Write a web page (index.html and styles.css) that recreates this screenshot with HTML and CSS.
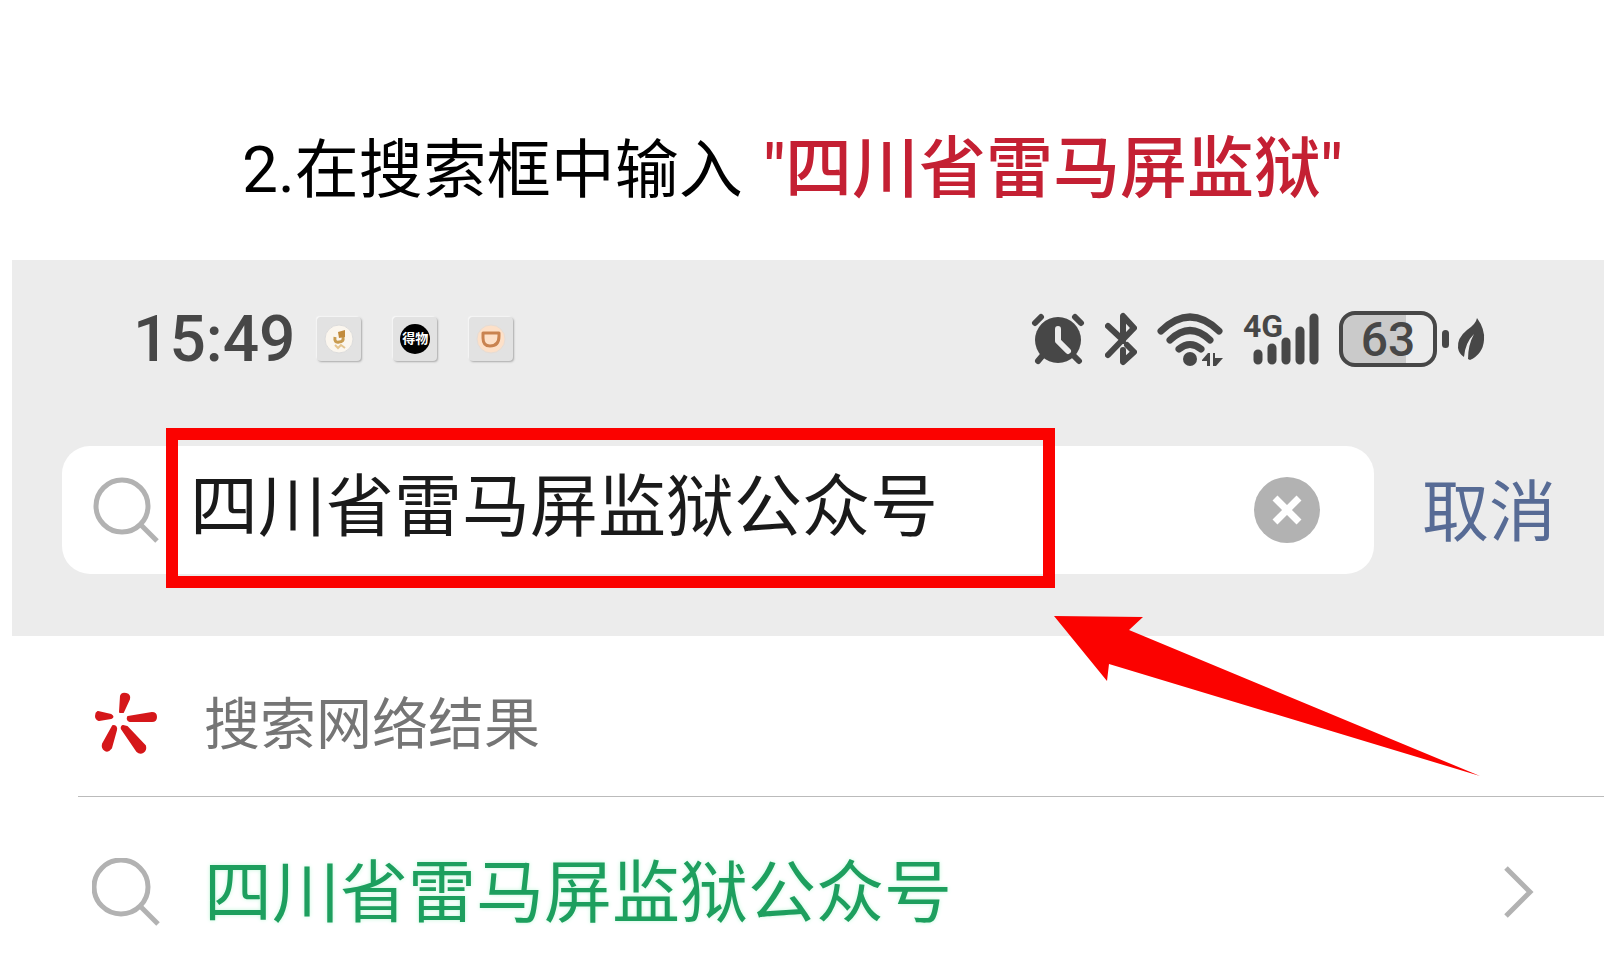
FILE: index.html
```html
<!DOCTYPE html>
<html lang="zh-CN">

<head>
    <meta charset="UTF-8">
    <meta name="viewport" content="width=device-width, initial-scale=1.0">
    <title>搜索公众号</title>
    <link rel="stylesheet" href="styles.css">
</head>

<body>
    <h1 class="step">2.在搜索框中输入 <em>"四川省雷马屏监狱"</em></h1>

    <div class="phone">
        <div class="top">
            <div class="status">
                <span class="time">15:49</span>
                <div class="apps">
                    <span class="app">
                        <svg width="30" height="30" viewBox="0 0 30 30">
                            <circle cx="15" cy="15" r="14" fill="#fbf6ee" stroke="#dcdcdc"/>
                            <path d="M11 13q-1 6 4 5q5 0 4-5" fill="none" stroke="#c99c50" stroke-width="3"/>
                            <path d="M14 8l7-2v7l-6 1z" fill="#c28b3c"/>
                            <path d="M11 21l3 3 3-3 4 3" fill="none" stroke="#e5c58f" stroke-width="2"/>
                        </svg>
                    </span>
                    <span class="app"><b class="dewu">得物</b></span>
                    <span class="app">
                        <svg width="30" height="30" viewBox="0 0 30 30">
                            <circle cx="15" cy="15" r="14" fill="#fde0c8" stroke="#e4dcd6"/>
                            <path d="M7 9h16v3q0 10-9 10q-7 0-7-8z" fill="none" stroke="#c98350" stroke-width="3" stroke-linejoin="round"/>
                        </svg>
                    </span>
                </div>
                <div class="signs">
                    <!-- alarm -->
                    <svg width="54" height="54" viewBox="0 0 54 54">
                        <g stroke="#474747" stroke-width="6" stroke-linecap="round">
                            <path d="M4 11l6-6M50 11l-6-6M12 43l-5 6M42 43l6 6"/>
                        </g>
                        <circle cx="27" cy="28" r="23" fill="#474747"/>
                        <path d="M27 17v12l10 10" fill="none" stroke="#ececec" stroke-width="6" stroke-linecap="round" stroke-linejoin="round"/>
                    </svg>
                    <!-- bluetooth -->
                    <svg width="32" height="54" viewBox="0 0 32 54">
                        <path d="M3 14l15 14M3 43l26-27L18 4v25M22 33l7 7-11 10V38" fill="none" stroke="#474747" stroke-width="6" stroke-linecap="round" stroke-linejoin="round"/>
                    </svg>
                    <!-- wifi -->
                    <svg width="66" height="54" viewBox="0 0 66 54">
                        <g fill="none" stroke="#474747" stroke-width="7" stroke-linecap="round">
                            <path d="M4 19q29-28 58 0M13 28q20-19 40 0M22 37q11-9 22 0"/>
                        </g>
                        <circle cx="33" cy="47" r="7" fill="#474747"/>
                        <path d="M45 48l6-7h2v13h-3v-5h-5zM56 41h2v5h8l-7 8h-3z" fill="#474747"/>
                    </svg>
                    <!-- mobile signal -->
                    <svg class="signal" width="76" height="54" viewBox="0 0 76 54">
                        <text class="net" x="0" y="25">4G</text>
                        <g stroke="#474747" stroke-width="9" stroke-linecap="round">
                            <path d="M15 42v6M29 36v12M43 30v18M57 19v29M71 6v42"/>
                        </g>
                    </svg>
                    <div class="power">
                        <span class="battery">63</span>
                        <i class="nub"></i>
                        <svg width="28" height="44" viewBox="0 0 28 44">
                            <path d="M20 1q8 11 7 22q-1 14-14 20l-2-1q0-14 6-25q-9 9-10 23q-5-3-6-9q-1-10 9-18q9-6 10-12z" fill="#474747"/>
                        </svg>
                    </div>
                </div>
            </div>

            <form class="search">
                <div class="box">
                    <label for="word" aria-label="搜索">
                        <svg width="68" height="68" viewBox="0 0 68 68">
                            <circle cx="30" cy="30" r="26" fill="none" stroke="#b2b2b2" stroke-width="5"/>
                            <path d="M48 48l17 17" stroke="#b2b2b2" stroke-width="5"/>
                        </svg>
                    </label>
                    <input id="word" type="text" value="四川省雷马屏监狱公众号">
                    <button class="clear" type="reset" aria-label="清除">
                        <svg width="66" height="66" viewBox="0 0 66 66">
                            <circle cx="33" cy="33" r="33" fill="#b2b2b2"/>
                            <path d="M21 21l24 24M45 21L21 45" stroke="#fff" stroke-width="7"/>
                        </svg>
                    </button>
                    <div class="frame"></div>
                    <svg class="arrow" width="426" height="160" viewBox="0 0 426 160">
                        <path d="M0 0L89 1L75 14L426 160L55 48L53 65z" fill="#fb0200"/>
                    </svg>
                </div>
                <button class="cancel" type="button">取消</button>
            </form>
        </div>

        <div class="list">
            <a class="row web" href="#">
                <svg width="68" height="68" viewBox="0 0 68 68">
                    <g fill="#d5171a" stroke="#d5171a" stroke-width="2" stroke-linejoin="round">
                        <path d="M29 7q1-3 5-2t3 5l-6 13h-3z"/>
                        <path d="M6 23l13 3q3 2 0 3l-12 2q-3-1-3-4t2-4z"/>
                        <path d="M36 28l24-4q4 0 4 4t-4 4H38q-3-1-2-4z"/>
                        <path d="M21 37q4 0 3 4l-5 18q-3 4-6 2t-2-6z"/>
                        <path d="M31 37l4 1 18 19q1 4-2 6t-6-1L30 40q-1-2 1-3z"/>
                    </g>
                </svg>
                <span>搜索网络结果</span>
            </a>
            <a class="row result" href="#">
                <svg width="68" height="68" viewBox="0 0 68 68">
                    <circle cx="29" cy="29" r="27" fill="none" stroke="#b2b2b2" stroke-width="5"/>
                    <path d="M48 48l18 18" stroke="#b2b2b2" stroke-width="5"/>
                </svg>
                <span>四川省雷马屏监狱公众号</span>
                <svg class="more" width="30" height="54" viewBox="0 0 30 54">
                    <path d="M2 3l24 24L2 51" fill="none" stroke="#b2b2b2" stroke-width="5"/>
                </svg>
            </a>
        </div>
    </div>
</body>

</html>
```
FILE: styles.css
```css
* {
    margin: 0;
    padding: 0;
    box-sizing: border-box;
}
body {
    background: #fff;
    font-family: Roboto, "Noto Sans CJK SC", sans-serif;
    overflow-x: hidden;
}
svg {
    display: block;
    flex: none;
}
button {
    border: none;
    background: none;
    font-family: inherit;
}
.step {
    height: 260px;
    padding: 125px 0 0 242px;
    font-size: 64px;
    line-height: 88px;
    font-weight: 400;
    color: #000;
    white-space: nowrap;
}
.step em {
    margin-left: 5px;
    font-size: 67px;
    font-style: normal;
    font-weight: 500;
    color: #c42033;
}
.phone {
    margin-left: 12px;
}
.top {
    height: 376px;
    background: #ececec;
}

/* status bar */
.status {
    display: flex;
    align-items: center;
    height: 156px;
    padding: 2px 119px 0 121px;
    color: #474747;
}
.time {
    font-size: 64px;
    font-weight: 500;
}
.apps {
    display: flex;
    gap: 32px;
    margin-left: 22px;
}
.app {
    display: flex;
    align-items: center;
    justify-content: center;
    width: 44px;
    height: 44px;
    border-radius: 4px;
    background: #e2e2e2;
    box-shadow: 1px 1px 2px #aaa, -1px -1px 1px #fafafa;
}
.dewu {
    width: 30px;
    height: 30px;
    border-radius: 50%;
    background: #000;
    color: #fff;
    font-size: 13px;
    line-height: 30px;
    text-align: center;
}
.signs {
    display: flex;
    align-items: center;
    gap: 20px;
    margin-left: auto;
}
.signal {
    overflow: visible;
}
.net {
    font-size: 32px;
    font-weight: 700;
    fill: #474747;
}
.power {
    display: flex;
    align-items: center;
}
.battery {
    width: 98px;
    height: 56px;
    border: 4px solid #474747;
    border-radius: 16px;
    background: linear-gradient(to right, #cacaca 70%, #ececec 70%);
    font-size: 48px;
    font-weight: 500;
    line-height: 50px;
    text-align: center;
}
.nub {
    width: 7px;
    height: 18px;
    margin: 0 8px 0 5px;
    border-radius: 4px;
    background: #474747;
}

/* search bar */
.search {
    display: flex;
    align-items: center;
    margin-top: 30px;
    padding: 0 48px 0 50px;
}
.box {
    position: relative;
    display: flex;
    flex: 1;
    align-items: center;
    height: 128px;
    padding: 0 54px 0 30px;
    border-radius: 28px;
    background: #fff;
}
.box input {
    flex: 1;
    min-width: 0;
    height: 128px;
    margin-left: 30px;
    padding-bottom: 18px;
    border: none;
    outline: none;
    background: none;
    font-family: inherit;
    font-size: 68px;
    color: #1a1a1a;
}
.frame {
    position: absolute;
    top: -18px;
    left: 104px;
    width: 889px;
    height: 160px;
    border: 12px solid #fb0200;
    pointer-events: none;
}
.arrow {
    position: absolute;
    top: 170px;
    left: 992px;
    z-index: 1;
    pointer-events: none;
}
.cancel {
    margin-left: 48px;
    padding-bottom: 8px;
    font-size: 67px;
    color: #576b95;
}

/* results */
.list {
    padding-left: 66px;
}
.row {
    display: flex;
    align-items: center;
    gap: 44px;
    padding-left: 14px;
    text-decoration: none;
}
.row span {
    margin-bottom: 8px;
}
.web {
    height: 161px;
    padding-top: 14px;
    border-bottom: 1px solid #bbb;
    font-size: 56px;
    color: #757575;
}
.result {
    height: 169px;
    padding-top: 20px;
    font-size: 68px;
    color: #1d9f5e;
}
.result span {
    text-shadow: 0 0 4px #c5f7dc;
}
.more {
    margin: 0 70px 0 auto;
}
```
